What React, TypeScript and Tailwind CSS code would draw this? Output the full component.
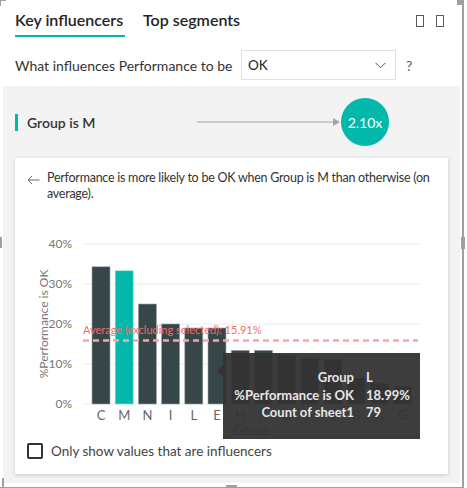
import React from "react";

const bars = [
  { g: "C", v: 34.3 },
  { g: "M", v: 33.3, sel: true },
  { g: "N", v: 25 },
  { g: "I", v: 20 },
  { g: "L", v: 19 },
  { g: "E", v: 19 },
  { g: "H", v: 13.4 },
  { g: "K", v: 13.4 },
  { g: "D", v: 12.3 },
  { g: "F", v: 11.5 },
  { g: "J", v: 11.2 },
  { g: "B", v: 6.5 },
  { g: "A", v: 5.2 },
  { g: "G", v: 4.5 },
];

const font = "'Lato', 'Open Sans', sans-serif";

function Chart() {
  const base = 175;
  return (
    <svg width="437" height="212" className="block" style={{ fontFamily: font }}>
      {[0, 10, 20, 30, 40].map((t) => (
        <g key={t}>
          <line x1="68" x2="405" y1={base - t * 4} y2={base - t * 4} stroke="#ececec" strokeWidth="1" />
          <text x="57" y={base - t * 4 + 4} textAnchor="end" fontSize="12" fill="#777">
            {t}%
          </text>
        </g>
      ))}
      <text
        x="30"
        y="95"
        transform="rotate(-90 30 95)"
        textAnchor="middle"
        fontSize="12"
        fill="#777"
        dominantBaseline="middle"
      >
        %Performance is OK
      </text>
      {bars.map((b, i) => {
        const x = 77 + i * 23.2;
        const h = b.v * 4;
        return (
          <g key={b.g}>
            <rect
              x={x}
              y={base - h}
              width="18"
              height={h}
              fill={b.sel ? "#01b8aa" : "#374649"}
              stroke={b.sel ? "#8fe0d9" : "#9aa3a4"}
              strokeWidth="0.6"
            />
            <text x={x + 9} y="191" textAnchor="middle" fontSize="13" fill="#666">
              {b.g}
            </text>
          </g>
        );
      })}
      <text x="237" y="206" textAnchor="middle" fontSize="13" fill="#666">
        Group
      </text>
      <line x1="68" x2="403" y1="111.5" y2="111.5" stroke="#f7a6a6" strokeWidth="2.5" strokeDasharray="6 4" />
      <text x="68" y="105" fontSize="11" fill="#f26b6b">
        Average (excluding selected): 15.91%
      </text>
    </svg>
  );
}

export default function App() {
  return (
    <div className="relative w-[467px] h-[488px] bg-white overflow-hidden text-[#333]" style={{ fontFamily: font }}>
      <div className="w-[464px] h-[488px] border-r-2 border-b border-[#a0a0a0]">
        <div className="flex items-end pl-[15px] pt-[9px] pr-[18px]">
          <div className="flex flex-col">
            <span className="text-[16px] font-semibold text-[#252423] leading-[22px]">Key influencers</span>
            <div className="mt-[4px] h-[2px] w-[110px] bg-[#01b8aa]" />
          </div>
          <span className="ml-[18px] mb-[6px] text-[16px] font-semibold text-[#252423] leading-[22px]">
            Top segments
          </span>
          <div className="ml-auto mb-[10px] flex gap-[12px]">
            <div className="w-[8px] h-[12px] border border-[#5a5a5a]" />
            <div className="w-[8px] h-[12px] border border-[#5a5a5a]" />
          </div>
        </div>

        <div className="flex items-center pl-[15px] mt-[13px] h-[30px]">
          <span className="text-[14px] text-[#333] w-[226px]">What influences Performance to be</span>
          <div className="flex items-center w-[155px] h-[30px] border border-[#e1e1e1] pl-[6px] pr-[9px]">
            <span className="text-[13.5px] text-[#222]">OK</span>
            <svg width="11" height="7" className="ml-auto" viewBox="0 0 11 7">
              <path d="M0.5 0.8 L5.5 5.8 L10.5 0.8" fill="none" stroke="#555" strokeWidth="1" />
            </svg>
          </div>
          <span className="ml-[10px] text-[14px] text-[#555]">?</span>
        </div>

        <div className="ml-[3px] mt-[6px] w-[457px] h-[397px] bg-[#f3f3f3] flex flex-col">
          <div className="flex items-center pl-[12px] mt-[12px] h-[48px]">
            <div className="w-[3px] h-[17px] bg-[#01b8aa]" />
            <span className="ml-[9px] w-[170px] text-[14px] font-semibold text-[#333]">Group is M</span>
            <svg width="144" height="10" viewBox="0 0 144 10">
              <line x1="0" x2="138" y1="5" y2="5" stroke="#a6a6a6" strokeWidth="1.2" />
              <path d="M136 1 L143 5 L136 9 Z" fill="#a6a6a6" />
            </svg>
            <div className="w-[48px] h-[48px] rounded-full bg-[#01b8aa] flex items-center justify-center text-white text-[14px]">
              2.10x
            </div>
          </div>

          <div className="relative mx-[12px] mt-[12px] h-[316px] bg-white shadow-[0_1px_4px_rgba(0,0,0,0.18)] flex flex-col">
            <div className="flex pl-[12px] pt-[12px]">
              <svg width="13" height="10" viewBox="0 0 13 10" className="mt-[5px] shrink-0">
                <path d="M12.5 5 H1 M5 1 L1 5 L5 9" fill="none" stroke="#666" strokeWidth="1" />
              </svg>
              <p className="ml-[7px] w-[394px] text-[12.5px] tracking-[-0.25px] leading-[16px] text-[#333]">
                Performance is more likely to be OK when Group is M than otherwise (on average).
              </p>
            </div>
            <div className="mt-[27px]">
              <Chart />
            </div>
            <div className="flex items-center pl-[12px]">
              <div className="w-[16px] h-[16px] border-2 border-[#333] rounded-[2px]" />
              <span className="ml-[8px] text-[13.5px] text-[#444]">Only show values that are influencers</span>
            </div>

            <div className="absolute left-[208px] top-[195px] w-[197px] h-[86px] bg-[#333333]/95 pt-[16px]">
              <div className="absolute left-[-6px] top-[12px] w-0 h-0 border-y-[6px] border-y-transparent border-r-[6px] border-r-[#333333]/95" />
              {[
                ["Group", "L"],
                ["%Performance is OK", "18.99%"],
                ["Count of sheet1", "79"],
              ].map(([k, v]) => (
                <div key={k} className="flex text-[13px] font-bold leading-[17.5px] text-[#e6e6e6]">
                  <span className="w-[131px] text-right">{k}</span>
                  <span className="ml-[12px]">{v}</span>
                </div>
              ))}
            </div>
          </div>
        </div>
      </div>

      <div className="absolute left-0 top-0 w-[6px] h-[1px] bg-[#a0a0a0]" />
      <div className="absolute left-0 top-0 w-[1px] h-[6px] bg-[#a0a0a0]" />
      <div className="absolute left-[457px] top-0 w-[7px] h-[5px] bg-[#a0a0a0]" />
      <div className="absolute left-0 top-[237px] w-[2px] h-[11px] bg-[#a0a0a0]" />
      <div className="absolute left-[461px] top-[237px] w-[4px] h-[12px] bg-[#a0a0a0]" />
      <div className="absolute left-[226px] top-[485px] w-[11px] h-[3px] bg-[#a0a0a0]" />
      <div className="absolute left-[2px] top-[478px] w-[2px] h-[10px] bg-[#a0a0a0]" />
    </div>
  );
}
